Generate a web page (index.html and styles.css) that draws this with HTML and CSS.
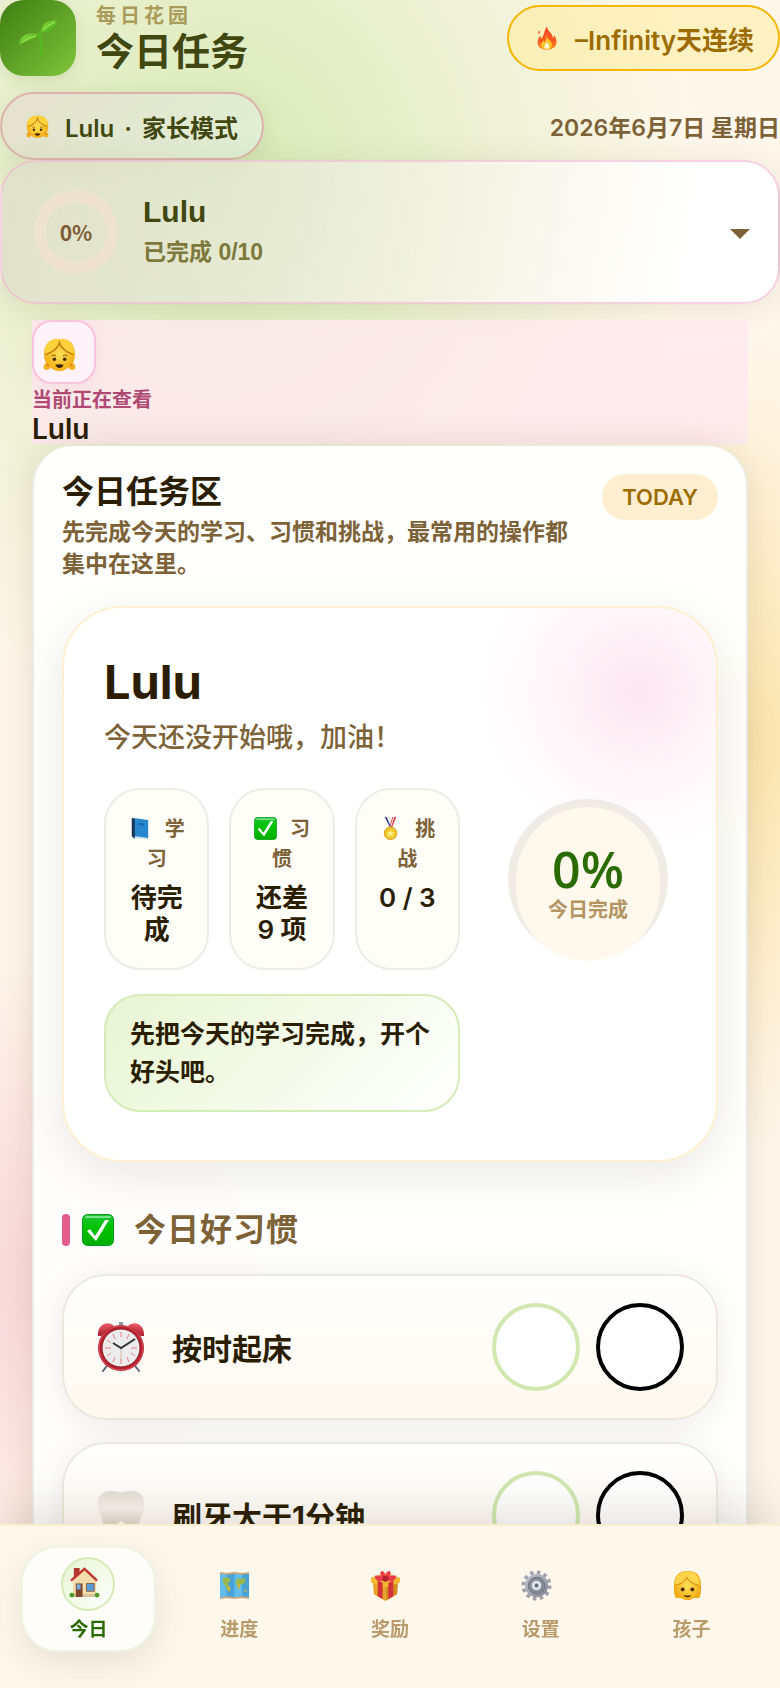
FILE: index.html
```
<!DOCTYPE html>
<html lang="zh-CN">
<head>
    <meta charset="UTF-8">
    <meta name="viewport" content="width=device-width, initial-scale=1.0">
    <title>今日任务</title>
    <link rel="stylesheet" href="styles.css">
</head>
<body>
    <svg class="defs" width="0" height="0" aria-hidden="true">
        <defs>
            <linearGradient id="g-check" x2="0" y2="1"><stop offset="0" stop-color="#22c53c"/><stop offset=".4" stop-color="#00c300"/><stop offset="1" stop-color="#00ae00"/></linearGradient>
            <radialGradient id="g-face" cx=".5" cy=".4" r=".6"><stop offset="0" stop-color="#ffe254"/><stop offset="1" stop-color="#f4ae16"/></radialGradient>
            <linearGradient id="g-leaf" x2="1" y2="1"><stop offset="0" stop-color="#8ce23c"/><stop offset="1" stop-color="#3f9f16"/></linearGradient>
            <linearGradient id="g-fire" x2="0" y2="1"><stop offset="0" stop-color="#f0482c"/><stop offset=".6" stop-color="#fb5a1f"/><stop offset="1" stop-color="#ff8f1c"/></linearGradient>
            <linearGradient id="g-tooth" x2="0" y2="1"><stop offset="0" stop-color="#e3dfd3"/><stop offset=".35" stop-color="#f8f6f0"/><stop offset="1" stop-color="#cfc2ac"/></linearGradient>
            <linearGradient id="g-gear" x2="1" y2="1"><stop offset="0" stop-color="#c4c9d2"/><stop offset="1" stop-color="#7e838e"/></linearGradient>
            <linearGradient id="g-bell" x2="0" y2="1"><stop offset="0" stop-color="#ee5a68"/><stop offset="1" stop-color="#a81f2c"/></linearGradient>
        </defs>
        <symbol id="i-girl" viewBox="0 0 32 32">
            <path d="M4 24c-3 1-4 3-3 6 3 2 6 1 7-3zM28 24c3 1 4 3 3 6-3 2-6 1-7-3z" fill="#f2b01f"/>
            <path d="M16 1C6 0 1 7 1 15c0 5 1 9 4 11h22c3-2 4-6 4-11C31 7 26 0 16 1z" fill="#eeb01d"/>
            <path d="M16 5C13 11 8 14 3 16c0 10 5 16 13 16s13-6 13-16c-5-2-10-5-13-11z" fill="url(#g-face)"/>
            <path d="M16 1C7 0 1 6 2 15c7-2 12-6 14-12 2 6 7 10 14 12C31 6 25 0 16 1z" fill="#ffd23e"/>
            <path d="M16 3v2C14 11 9 14 3 16M16 5c2 6 7 9 13 11" fill="none" stroke="#b8740f" stroke-width="1.200"/>
            <path d="M8.500 17.500q2-2 4 0m7 0q2-2 4 0" fill="none" stroke="#9a5c10"/>
            <circle cx="11" cy="20.500" r="1.700" fill="#4a2a08"/><circle cx="21" cy="20.500" r="1.700" fill="#4a2a08"/>
            <path d="M12 26q4-1 8 0-1 3-4 3t-4-3z" fill="#3a1f06"/>
            <circle cx="4.500" cy="26" r="1.200" fill="#ef7d22"/><circle cx="27.500" cy="26" r="1.200" fill="#ef7d22"/>
        </symbol>
        <symbol id="i-child" viewBox="0 0 32 32">
            <path d="M16 1C6 1 2 7 2 16c0 7 0 10 2 13h24c2-3 2-6 2-13C30 7 26 1 16 1z" fill="#f0ae1c"/>
            <path d="M5 14c0 11 3 17 11 17s11-6 11-17c-4-1-9-4-11-7-2 4-6 6-11 7z" fill="url(#g-face)"/>
            <path d="M13 2C6 3 3 8 3 15c6 0 11-4 12-9 3 5 8 9 14 10 0-9-5-16-16-14z" fill="#ffd54a"/>
            <path d="M4 15c5 0 9-3 11-7 3 4 8 7 13 8" fill="none" stroke="#c98714"/>
            <circle cx="11" cy="20" r="2" fill="#4a2a08"/><circle cx="21" cy="20" r="2" fill="#4a2a08"/>
            <path d="M12 26q4 1 8 0-1 2-4 2t-4-2z" fill="#3a1f06"/>
        </symbol>
        <symbol id="i-sprout" viewBox="0 0 40 38">
            <path d="M23 36c1-8 1-14-2-20 3-4 4-6 7-8M21 17c-3-2-6-1-9 1" fill="none" stroke="#56b81f" stroke-width="2.500" stroke-linecap="round"/>
            <path d="M1 26c1-9 7-13 19-11-2 6-10 6-19 11z" fill="url(#g-leaf)"/>
            <path d="M23 13C23 6 28 1 39 1c-1 9-7 13-16 12z" fill="url(#g-leaf)"/>
            <path d="M4 23q7-5 14-6M25 11q6-5 12-8" fill="none" stroke="#b2ee66"/>
        </symbol>
        <symbol id="i-fire" viewBox="0 0 24 28">
            <path d="M12 0c0 6 7 8 7 14l2-3c5 9 2 17-9 17S-1 21 2 14l2-3 1 4c4-4 3-9 7-15z" fill="url(#g-fire)"/>
            <path d="M2 6c2-1 2 1 1 3-2 0-2-1-1-3z" fill="#ff5429"/>
            <path d="M12 11c0 5 7 7 6 12-1 6-12 6-13 0 0-4 2-4 3-6l1 2c2-2 2-5 3-8z" fill="#ffc62b"/>
            <path d="M12 19c3 3 4 8 0 8s-4-4 0-8z" fill="#fffbd6"/>
        </symbol>
        <symbol id="i-book" viewBox="0 0 24 24">
            <path d="M3 1l3 1v21l-3-3z" fill="#123a5e"/>
            <path d="M6 20l14 1v2l-14 0z" fill="#dfe7ec"/>
            <path d="M5 1l15 2v19L6 20z" fill="#2687cf"/>
            <path d="M3 1l3 1v20l-3-2z" fill="#173454"/>
            <path d="M10 6l6 1v2l-6-1z" fill="#1b67a8"/>
        </symbol>
        <symbol id="i-check" viewBox="0 0 32 32">
            <rect x=".5" y=".5" width="31" height="31" rx="5" fill="url(#g-check)" stroke="#079a1c"/>
            <path d="M4 3h24" stroke="#7be08c" stroke-width="2" stroke-linecap="round"/>
            <path d="M5 17l3-2 5 7L23 6h4L14 27z" fill="#fff"/>
        </symbol>
        <symbol id="i-medal" viewBox="0 0 24 24">
            <path d="M6 0h4l4 10h-3z" fill="#2a3c9a"/><path d="M8 0h2l4 9h-2z" fill="#fff"/>
            <path d="M18 0h-4l-3 10h3z" fill="#d63a41"/><path d="M16 0h-1l-3 9h1z" fill="#fff"/>
            <circle cx="12" cy="17" r="6.500" fill="#f2c72b" stroke="#d59a12"/>
            <path d="M12 13l1 3h3l-2 2 1 3-3-2-3 2 1-3-2-2h3z" fill="#fff08a"/>
        </symbol>
        <symbol id="i-clock" viewBox="0 0 48 50">
            <path d="M12 41l-6 8M36 41l6 8" stroke="#5c6677" stroke-width="2" stroke-linecap="round"/>
            <path d="M1 14C0 2 11-2 17 4L4 14zM47 14C48 2 37-2 31 4l13 10z" fill="url(#g-bell)"/>
            <path d="M22 0h4v4h-4z" fill="#8c97a8"/>
            <circle cx="24" cy="26" r="23" fill="#b5202e"/>
            <circle cx="24" cy="26" r="22" fill="none" stroke="#dc5561"/>
            <circle cx="24" cy="26" r="19" fill="#ececec" stroke="#8d1f29"/>
            <path d="M24 10v5M24 37v5M8 26h6M34 26h6M16 12l2 5M10 18l4 3M38 34l-4-3M32 40l-2-5M16 40l2-5M10 34l4-3M32 12l-2 5" stroke="#f0808a"/>
            <path d="M24 26v14" stroke="#d9b9a0"/>
            <path d="M16 21l8 5 14-9" fill="none" stroke="#333" stroke-width="2"/>
        </symbol>
        <symbol id="i-tooth" viewBox="0 0 48 50">
            <path d="M13 1C3 1 0 8 1 17c1 6 4 10 5 17 1 8 2 15 6 15 5 0 6-18 12-18s7 18 12 18c4 0 5-7 6-15 1-7 4-11 5-17C48 8 45 1 35 1c-5 0-7 1-11 1S18 1 13 1z" fill="url(#g-tooth)"/>
        </symbol>
        <symbol id="i-house" viewBox="0 0 32 32">
            <path d="M5 1h6v10H5z" fill="#b3392f"/>
            <path d="M4 14L16 3l12 11v16H4z" fill="#f4dcab"/>
            <path d="M2 14L16 2l13 12" fill="none" stroke="#c0342d" stroke-width="2.500"/>
            <path d="M3 28h26v3H3z" fill="#d6c29b"/>
            <path d="M7 17h7v14H7z" fill="#7e4630"/><path d="M8 18h4v5H8z" fill="#77aede"/>
            <path d="M18 17h8v8h-8z" fill="#579bd6" stroke="#8a5f45"/>
            <circle cx="3" cy="29" r="2.500" fill="#4c9a2c"/><circle cx="29" cy="29" r="2.500" fill="#4c9a2c"/>
        </symbol>
        <symbol id="i-map" viewBox="0 0 32 32">
            <path d="M1 3l7 1 8-1 8 1 7-1v26l-7-1-8 1-8-1-7 1z" fill="#62bdeb"/>
            <path d="M8 4l8-1v26l-8-1zM24 4l7-1v26l-7-1z" fill="#47a3d6"/>
            <path d="M4 8l7 0 1 3-3 3 2 4-1 5-3-6-3-4zM18 9l10 0-2 5-4 1-1 5-4-6z" fill="#9cb84b"/>
            <path d="M9 16l3 3-2 4zM19 14l3 2-1 4zM26 20l3 1-2 2z" fill="#e0b53a"/>
            <path d="M1 3l7 1 8-1 8 1 7-1M1 29l7-1 8 1 8-1 7 1" fill="none" stroke="#c8a67f" stroke-width="2"/>
        </symbol>
        <symbol id="i-gift" viewBox="0 0 32 32">
            <path d="M3 11l13 5v16L4 25z" fill="#e7a225"/><path d="M29 11l-13 5v16l12-7z" fill="#d58a1b"/>
            <path d="M1 8l15-5 15 5v5l-15 5L1 13z" fill="#f1b934"/>
            <path d="M8 11l5 2v17l-5-3zM24 11l-5 2v17l5-3z" fill="#d3323c"/>
            <path d="M16 10C9 13 5 11 5 6c5-1 9 0 11 4zM16 10c7 3 11 1 11-4-5-1-9 0-11 4zM16 9C11 7 9 3 12 1c3 0 4 3 4 8zM16 9c5-2 7-6 4-8-3 0-4 3-4 8z" fill="#ea3d49"/>
            <circle cx="16" cy="9" r="3" fill="#b5222d"/>
        </symbol>
        <symbol id="i-gear" viewBox="0 0 32 32">
            <circle cx="16" cy="16" r="13.500" fill="none" stroke="#9ca1ac" stroke-width="4" stroke-dasharray="3.500 3.570"/>
            <circle cx="16" cy="16" r="12" fill="url(#g-gear)"/>
            <circle cx="16" cy="16" r="8.500" fill="#858b97" stroke="#6d727d"/>
            <circle cx="16" cy="16" r="5" fill="#dfe2e7"/><circle cx="16" cy="16" r="2" fill="#656a75"/>
        </symbol>
    </svg>

    <div class="app">
        <header class="topbar">
            <div class="topbar-row">
                <div class="brand">
                    <div class="logo"><svg class="logo-icon"><use href="#i-sprout"/></svg></div>
                    <div>
                        <div class="brand-label">每日花园</div>
                        <h1 class="brand-title">今日任务</h1>
                    </div>
                </div>
                <div class="streak">
                    <svg class="streak-icon"><use href="#i-fire"/></svg>
                    <span>–Infinity天连续</span>
                </div>
            </div>
            <div class="topbar-row meta-row">
                <button class="mode-pill" type="button">
                    <svg class="mode-icon"><use href="#i-girl"/></svg>
                    <span class="mode-text"><span>Lulu</span><span>·</span><span>家长模式</span></span>
                </button>
                <div class="date">2026年6月7日 星期日</div>
            </div>
        </header>

        <button class="child-card" type="button">
            <span class="mini-ring">0%</span>
            <span class="child-info">
                <span class="child-name">Lulu</span>
                <span class="child-done">已完成 0/10</span>
            </span>
            <span class="caret"></span>
        </button>

        <main class="content">
            <div class="viewing">
                <div class="avatar"><svg class="avatar-icon"><use href="#i-girl"/></svg></div>
                <div class="viewing-label">当前正在查看</div>
                <div class="viewing-name">Lulu</div>
            </div>

            <section class="panel">
                <div class="panel-head">
                    <div class="panel-text">
                        <h2 class="panel-title">今日任务区</h2>
                        <p class="panel-desc">先完成今天的学习、习惯和挑战，最常用的操作都集中在这里。</p>
                    </div>
                    <span class="badge">TODAY</span>
                </div>

                <div class="hero">
                    <div class="hero-head">
                        <h3 class="hero-name">Lulu</h3>
                        <p class="hero-sub">今天还没开始哦，加油！</p>
                    </div>
                    <div class="hero-grid">
                        <div class="stats">
                            <div class="stat">
                                <div class="stat-label"><svg class="stat-icon"><use href="#i-book"/></svg>学习</div>
                                <div class="stat-value">待完成</div>
                            </div>
                            <div class="stat">
                                <div class="stat-label"><svg class="stat-icon"><use href="#i-check"/></svg>习惯</div>
                                <div class="stat-value">还差<br>9 项</div>
                            </div>
                            <div class="stat">
                                <div class="stat-label"><svg class="stat-icon"><use href="#i-medal"/></svg>挑战</div>
                                <div class="stat-value">0 / 3</div>
                            </div>
                        </div>
                        <div class="ring">
                            <div class="ring-inner">
                                <strong class="ring-value">0%</strong>
                                <span class="ring-label">今日完成</span>
                            </div>
                        </div>
                        <p class="hint">先把今天的学习完成，开个好头吧。</p>
                    </div>
                </div>

                <h3 class="group-title"><svg class="group-icon"><use href="#i-check"/></svg>今日好习惯</h3>

                <div class="habits">
                    <div class="habit">
                        <svg class="habit-icon"><use href="#i-clock"/></svg>
                        <span class="habit-name">按时起床</span>
                        <button class="dot dot-done" type="button" aria-label="完成"></button>
                        <button class="dot" type="button" aria-label="未完成"></button>
                    </div>
                    <div class="habit">
                        <svg class="habit-icon"><use href="#i-tooth"/></svg>
                        <span class="habit-name">刷牙大于1分钟</span>
                        <button class="dot dot-done" type="button" aria-label="完成"></button>
                        <button class="dot" type="button" aria-label="未完成"></button>
                    </div>
                </div>
            </section>
        </main>
    </div>

    <nav class="tabbar">
        <a class="tab active" href="#today"><span class="tab-icon"><svg><use href="#i-house"/></svg></span>今日</a>
        <a class="tab" href="#progress"><span class="tab-icon"><svg><use href="#i-map"/></svg></span>进度</a>
        <a class="tab" href="#rewards"><span class="tab-icon"><svg><use href="#i-gift"/></svg></span>奖励</a>
        <a class="tab" href="#settings"><span class="tab-icon"><svg><use href="#i-gear"/></svg></span>设置</a>
        <a class="tab" href="#kids"><span class="tab-icon"><svg><use href="#i-child"/></svg></span>孩子</a>
    </nav>
</body>
</html>
```
FILE: styles.css
```
* { box-sizing: border-box; }
body {
    margin: 0;
    font-family: Inter, "Noto Sans CJK SC", sans-serif;
    font-weight: 600;
    color: #2b1e00;
    background:
        radial-gradient(ellipse 62% 32% at 28% 11%, rgba(190, 225, 145, 0.6), transparent) fixed,
        radial-gradient(ellipse 36% 24% at 95% 44%, rgba(250, 212, 110, 0.5), transparent) fixed,
        radial-gradient(ellipse 45% 20% at 8% 76%, rgba(240, 165, 190, 0.4), transparent) fixed,
        #fff7ec;
}
h1, h2, h3, p { margin: 0; }
button { font-family: inherit; font-weight: inherit; cursor: pointer; }
svg { display: block; }
.defs { position: absolute; }
.app { display: flex; flex-direction: column; min-height: 100vh; }

/* header */
.topbar-row { display: flex; justify-content: space-between; align-items: center; }
.meta-row { margin-top: 16px; }
.brand { display: flex; align-items: center; gap: 20px; }
.logo {
    display: flex;
    align-items: center;
    justify-content: center;
    width: 76px;
    height: 76px;
    border-radius: 24px;
    background: linear-gradient(135deg, #3f7d10, #7fc63c);
    box-shadow: 0 4px 16px rgba(80, 120, 30, 0.15);
}
.logo-icon { width: 40px; height: 38px; }
.brand-label { font-size: 20px; line-height: 26px; letter-spacing: 4px; color: #ab9b5a; font-weight: 700; }
.brand-title { font-size: 38px; line-height: 44px; color: #414711; font-weight: 700; }
.streak {
    display: flex;
    align-items: center;
    gap: 18px;
    height: 66px;
    padding: 0 24px 0 28px;
    border: 2px solid #f5b600;
    border-radius: 33px;
    background: rgba(255, 236, 150, 0.5);
    color: #9c6c00;
    font-size: 26px;
}
.streak-icon { width: 20px; height: 26px; }
.mode-pill {
    display: flex;
    align-items: center;
    gap: 16px;
    height: 68px;
    padding: 0 24px;
    border: 2px solid #dcb3ab;
    border-radius: 34px;
    background: linear-gradient(135deg, #e5e0cd, #e0f0d4);
    box-shadow: 0 4px 24px rgba(70, 90, 20, 0.1);
    color: #414711;
    font-size: 24px;
}
.mode-text { display: flex; align-items: baseline; gap: 10px; }
.mode-icon { width: 23px; height: 23px; }
.date { font-size: 23px; color: #7d6238; }

/* child switcher */
.child-card {
    display: flex;
    align-items: center;
    gap: 25px;
    height: 144px;
    padding: 0 28px 0 32px;
    border: 2px solid rgba(242, 178, 208, 0.6);
    border-radius: 36px;
    background: linear-gradient(100deg, rgba(220, 220, 200, 0.75), rgba(248, 246, 240, 0.6) 60%, #fff 90%);
    box-shadow: 0 4px 32px rgba(80, 80, 30, 0.12);
    text-align: left;
}
.mini-ring {
    display: flex;
    align-items: center;
    justify-content: center;
    width: 84px;
    height: 84px;
    border: 12px solid #efe3d0;
    border-radius: 50%;
    color: #7d5c34;
    font-size: 21px;
    font-family: "Noto Sans CJK SC", sans-serif;
    font-weight: 700;
}
.child-info { flex: 1; display: flex; flex-direction: column; padding-bottom: 4px; }
.child-name { font-family: "Liberation Sans", sans-serif; font-weight: 700; font-size: 30px; line-height: 44px; color: #414711; }
.child-done { font-family: "Liberation Sans", "Noto Sans CJK SC", sans-serif; font-size: 23px; line-height: 36px; color: #7d783c; font-weight: 700; }
.caret { margin-top: 4px; border: 10px solid transparent; border-top-color: #7d6238; border-bottom: 0; }

.content { flex: 1; display: flex; flex-direction: column; gap: 2px; padding: 16px 32px 0; }
.viewing { height: 124px; background: rgba(255, 232, 240, 0.8); }
.avatar {
    display: flex;
    align-items: center;
    padding: 4px 0 0 9px;
    width: 64px;
    height: 64px;
    border: 2px solid #f8c3de;
    border-radius: 20px;
    background: #fff3f9;
    box-shadow: 0 4px 16px rgba(230, 130, 170, 0.12);
}
.avatar-icon { width: 33px; height: 33px; }
.viewing-label { font-size: 20px; line-height: 32px; color: #b04a74; }
.viewing-name { font-size: 28px; line-height: 26px; }

/* today panel */
.panel {
    flex: 1;
    padding: 26px 28px 180px;
    border: 2px solid #ebebe8;
    border-top: 0;
    border-radius: 40px 40px 0 0;
    background: rgba(255, 255, 254, 0.96);
    box-shadow: 0 0 36px rgba(80, 60, 20, 0.13);
}
.panel-head { display: flex; justify-content: space-between; align-items: flex-start; gap: 24px; }
.panel-title { font-size: 32px; line-height: 40px; font-weight: 700; }
.panel-desc { margin-top: 4px; font-size: 23px; line-height: 32px; color: #7d6238; font-weight: 700; }
.panel-text { flex: 1; }
.badge {
    margin-top: 2px;
    padding: 0 20px;
    border-radius: 23px;
    background: #ffefd0;
    color: #9c6c00;
    font-size: 22px;
    line-height: 46px;
}
.hero {
    margin-top: 26px;
    padding: 46px 40px 48px;
    border: 2px solid #fff0d2;
    border-radius: 60px;
    background: radial-gradient(circle at 88% 84px, #fce6ef, rgba(255, 243, 248, 0.8) 80px, transparent 160px), #fff;
    box-shadow: 0 12px 48px rgba(80, 70, 60, 0.12);
}
.hero-name { font-size: 47px; line-height: 56px; }
.hero-sub { margin-top: 8px; font-size: 27px; line-height: 40px; color: #7d6238; font-weight: 500; }
.hero-grid { display: grid; grid-template-columns: 1fr 176px; gap: 24px 40px; margin-top: 30px; }
.stats { display: grid; grid-template-columns: repeat(3, 1fr); gap: 20px; }
.stat {
    padding: 24px 18px 22px;
    min-height: 182px;
    border: 2px solid #efece7;
    border-radius: 36px;
    background: #fffdf8;
    text-align: center;
}
.stat-label { font-size: 20px; line-height: 30px; color: #7d6238; }
.stat-icon { display: inline-block; width: 23px; height: 23px; margin-right: 13px; vertical-align: -4px; }
.stat-value { margin-top: 8px; font-size: 26px; line-height: 32px; }
.ring {
    justify-self: center;
    align-self: center;
    width: 160px;
    height: 160px;
    padding: 8px;
    border-radius: 50%;
    background: #f1ebe6;
}
.ring-inner {
    display: flex;
    flex-direction: column;
    align-items: center;
    justify-content: center;
    height: 154px;
    border-radius: 72px;
    background: #fff8ec;
}
.ring-value { font-family: "Open Sans", sans-serif; font-size: 50px; line-height: 52px; font-weight: 600; color: #2a6b00; }
.ring-label { font-size: 20px; line-height: 30px; color: #b39462; font-weight: 700; }
.hint {
    padding: 19px 24px;
    border: 2px solid #d5ecb8;
    border-radius: 36px;
    background: linear-gradient(135deg, #e8f5d2, #fff);
    font-size: 25px;
    line-height: 38px;
}
.group-title {
    display: flex;
    align-items: center;
    margin: 50px 0 26px;
    font-size: 32px;
    line-height: 36px;
    letter-spacing: 1px;
    color: #7d6238;
    font-weight: 700;
}
.group-title::before { content: ""; width: 8px; height: 32px; border-radius: 4px; background: #e35c8e; }
.group-icon { width: 32px; height: 32px; margin: 0 20px 0 12px; }
.habits { display: flex; flex-direction: column; gap: 22px; }
.habit {
    display: flex;
    align-items: center;
    gap: 16px;
    height: 146px;
    padding: 0 32px;
    border: 2px solid #ede8de;
    border-radius: 44px;
    background: linear-gradient(#fff, #fff8ee);
    box-shadow: 0 4px 32px rgba(80, 70, 60, 0.1);
}
.habit-icon { width: 50px; height: 50px; }
.habit-name { flex: 1; margin-left: 10px; font-size: 30px; font-weight: 700; }
.dot { width: 88px; height: 88px; border: 4px solid #000; border-radius: 50%; background: #fff; }
.dot-done { border-color: #d0e8b0; }

/* bottom navigation */
.tabbar {
    position: fixed;
    left: 0;
    right: 0;
    bottom: 0;
    display: grid;
    grid-template-columns: repeat(5, 1fr);
    gap: 16px;
    height: 164px;
    padding: 20px 21px 36px;
    border-top: 2px solid #fcedcf;
    background: #fef7ec;
    box-shadow: 0 -8px 48px rgba(60, 50, 30, 0.16);
}
.tab {
    display: flex;
    flex-direction: column;
    align-items: center;
    gap: 3px;
    padding-top: 9px;
    border: 2px solid transparent;
    border-radius: 36px;
    color: #b99b6b;
    font-size: 19px;
    line-height: 32px;
    font-weight: 700;
    text-decoration: none;
}
.tab-icon { display: flex; align-items: center; padding: 2px 0 0 5px; width: 54px; height: 54px; border: 2px solid transparent; border-radius: 50%; }
.tab-icon svg { width: 31px; height: 31px; }
.tab.active { color: #2a6b00; border-color: #edf4e0; background: #fffdfa; box-shadow: 0 12px 32px rgba(80, 70, 50, 0.12); }
.active .tab-icon { padding: 0 0 4px 6px; border-color: #d5ecb8; background: linear-gradient(135deg, #e8f5d2, #fff); }
```
